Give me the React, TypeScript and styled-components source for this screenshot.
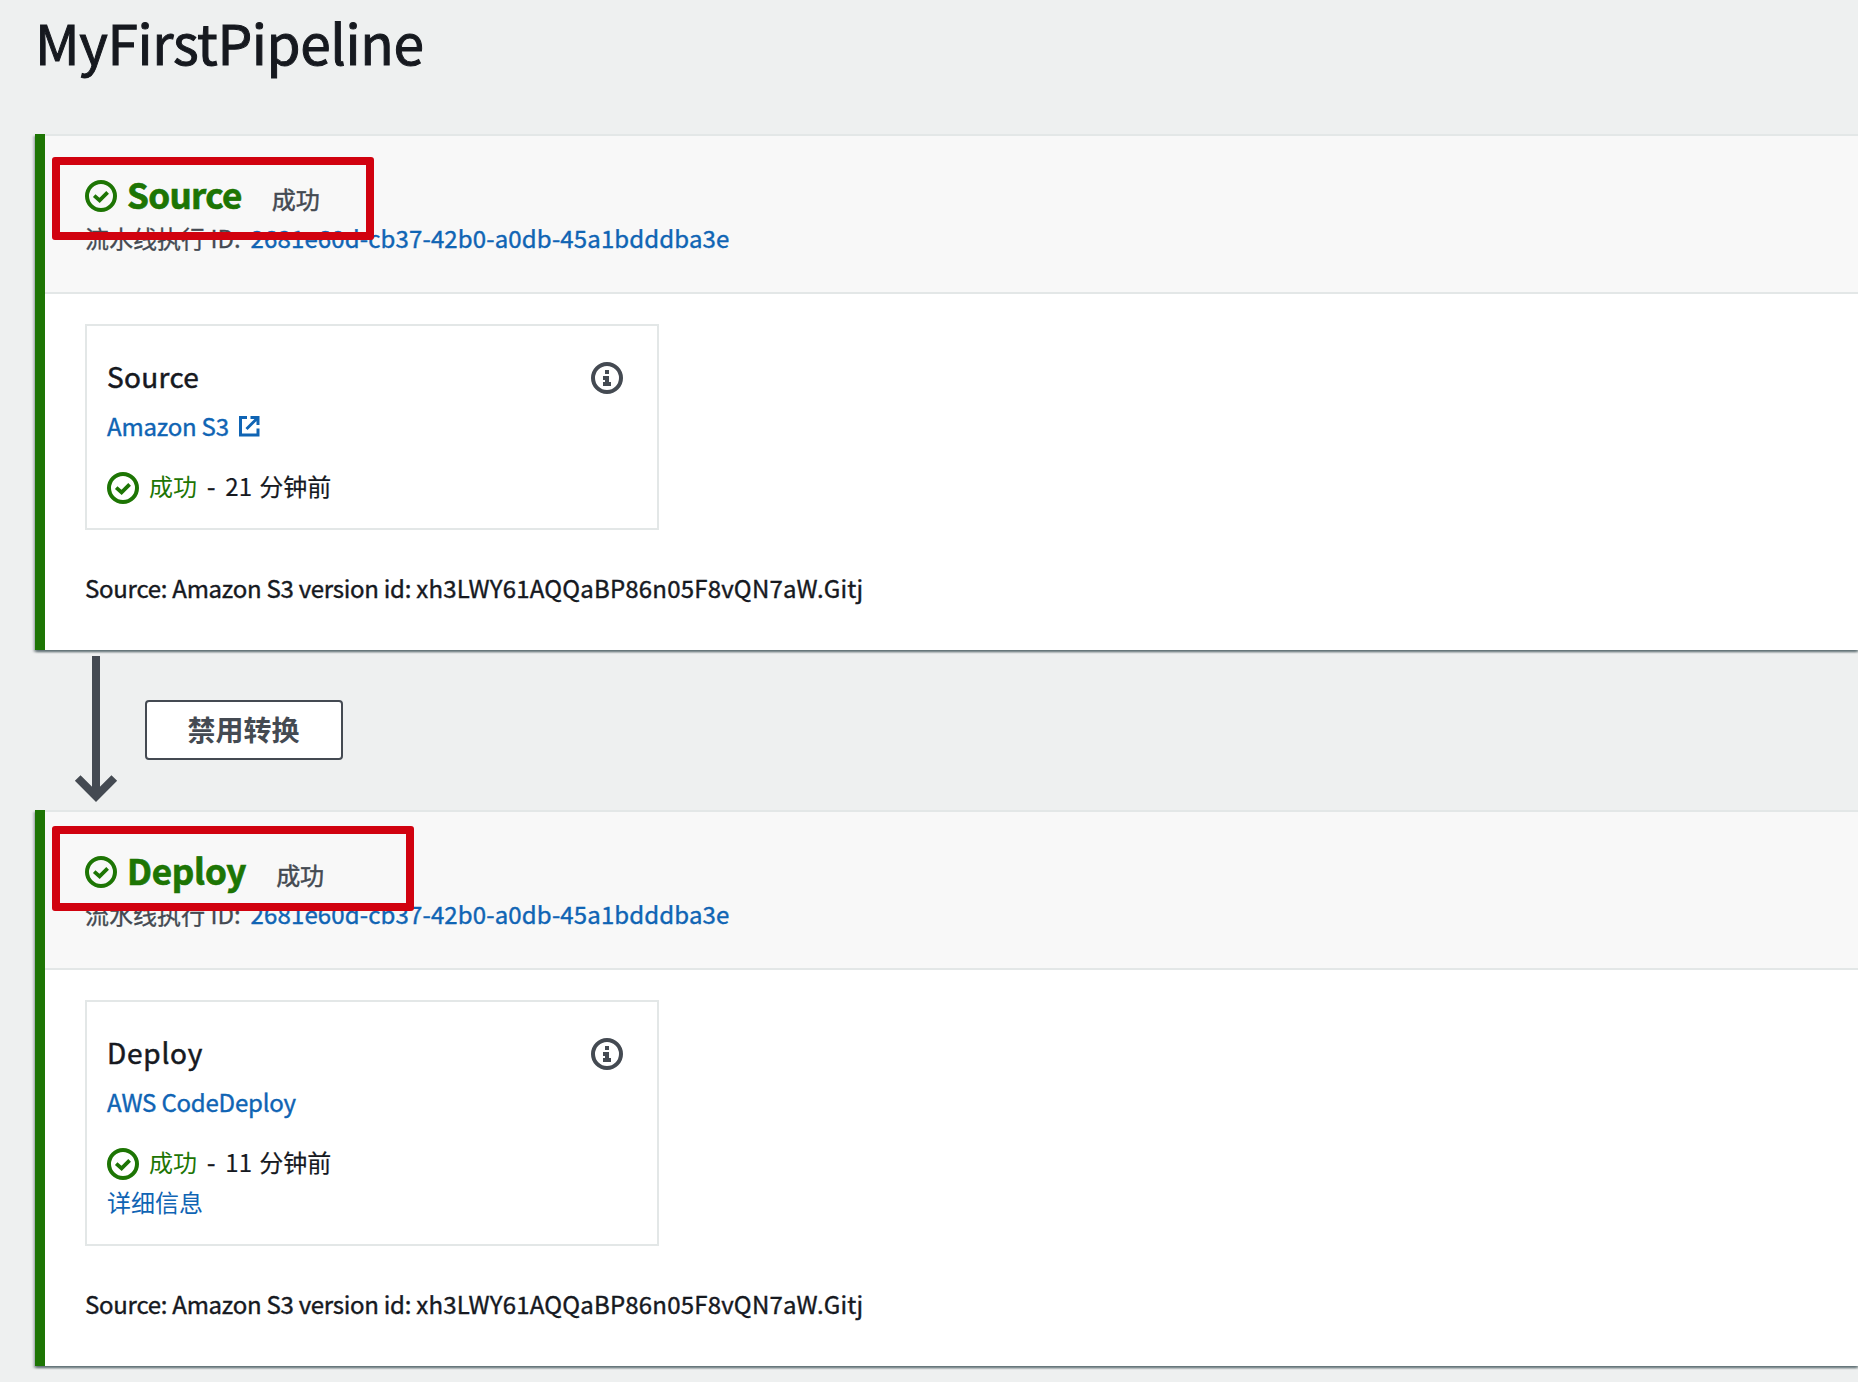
import React from 'react';
import styled, { createGlobalStyle } from 'styled-components';

const color = {
  page: '#eef0f0',
  text: '#16191f',
  muted: '#444a52',
  link: '#0f64b4',
  success: '#1d7504',
  line: '#e3e7e7',
  highlight: '#d1020f',
};

const GlobalStyle = createGlobalStyle`
  *, *::before, *::after { box-sizing: border-box; }
  html, body { margin: 0; padding: 0; background: ${color.page}; }
  body {
    font-family: "Noto Sans CJK SC", "Noto Sans", sans-serif;
    font-size: 24px;
    line-height: 40px;
    color: ${color.text};
    overflow: hidden;
  }
`;

const Page = styled.main`
  height: 1382px;
  padding: 8px 0 0 35px;
  overflow: hidden;
`;

const Title = styled.h1`
  margin: 0 0 60px;
  font-size: 55px;
  font-weight: 400;
  line-height: 66px;
  letter-spacing: -0.4px;
  -webkit-text-stroke: 1px ${color.text};
`;

const Panel = styled.section`
  border-left: 10px solid ${color.success};
  background: #fff;
  box-shadow:
    0 2px 2px 0 rgba(0, 28, 36, 0.4),
    2px 2px 2px 0 rgba(0, 28, 36, 0.18),
    -2px 2px 2px 0 rgba(0, 28, 36, 0.18);
`;

const PanelHeader = styled.header`
  position: relative;
  height: 160px;
  padding: 33px 40px 0;
  border-top: 2px solid ${color.line};
  border-bottom: 2px solid ${color.line};
  background: #f8f8f8;
`;

const Highlight = styled.div<{ $top: number; $width: number; $height: number }>`
  position: absolute;
  left: 7px;
  top: ${(p) => p.$top}px;
  width: ${(p) => p.$width}px;
  height: ${(p) => p.$height}px;
  border: 8px solid ${color.highlight};
  border-radius: 3px;
`;

const StageRow = styled.div`
  display: flex;
  align-items: baseline;
  height: 49px;
`;

const StageName = styled.h2<{ $spacing: number }>`
  margin: 0 0 0 10px;
  font-size: 35px;
  font-weight: 700;
  line-height: 49px;
  letter-spacing: ${(p) => p.$spacing}px;
  color: ${color.success};
  -webkit-text-stroke: 0.7px ${color.success};
`;

const StageState = styled.span`
  margin-left: 30px;
  color: ${color.muted};
  -webkit-text-stroke: 0.5px ${color.muted};
`;

const ExecutionRow = styled.div`
  display: flex;
  gap: 10px;
  color: ${color.muted};
  -webkit-text-stroke: 0.3px ${color.muted};
`;

const Link = styled.a<{ $spacing?: number; $stroke?: number }>`
  display: inline-flex;
  color: ${color.link};
  text-decoration: none;
  letter-spacing: ${(p) => p.$spacing ?? 0}px;
  -webkit-text-stroke: ${(p) => p.$stroke ?? 0.4}px ${color.link};
`;

const PanelBody = styled.div`
  padding: 30px 40px 42px;
`;

const ActionCard = styled.article`
  width: 574px;
  padding: 30px 34px 22px 20px;
  border: 2px solid ${color.line};
`;

const CardHead = styled.div`
  display: flex;
  justify-content: space-between;
  align-items: flex-start;
  height: 40px;
  margin-bottom: 10px;
`;

const CardTitle = styled.h3<{ $spacing: number }>`
  margin: 0;
  font-size: 28px;
  font-weight: 400;
  letter-spacing: ${(p) => p.$spacing}px;
  -webkit-text-stroke: 0.5px ${color.text};
`;

const ProviderRow = styled.div`
  display: flex;
  align-items: flex-start;
  gap: 10px;
  margin-bottom: 20px;
`;

const StatusRow = styled.div`
  display: flex;
`;

const StatusText = styled.span`
  margin-left: 10px;
  color: ${color.success};
`;

const Dash = styled.span`
  margin: 0 10px;
  -webkit-text-stroke: 0.5px ${color.text};
`;

const Ago = styled.span`
  word-spacing: 2px;
  -webkit-text-stroke: 0.2px ${color.text};
`;

const Revision = styled.p`
  margin: 38px 0 0;
  white-space: pre;
  letter-spacing: -0.27px;
  -webkit-text-stroke: 0.4px ${color.text};
`;

const RevisionId = styled.span`
  letter-spacing: 0.2px;
`;

const Transition = styled.div`
  display: flex;
  align-items: flex-start;
  height: 160px;
  padding: 6px 0 0 39px;
`;

const TransitionButton = styled.button`
  width: 198px;
  height: 60px;
  margin: 44px 0 0 27px;
  padding: 0 1px 2px 0;
  border: 2px solid ${color.muted};
  border-radius: 4px;
  background: #fff;
  color: ${color.muted};
  font: 700 28px/54px "Noto Sans CJK SC", sans-serif;
`;

const Icon = styled.svg<{ $top: number }>`
  display: block;
  flex: none;
  align-self: flex-start;
  margin-top: ${(p) => p.$top}px;
  fill: none;
`;

const CheckIcon = ({ top }: { top: number }) => (
  <Icon $top={top} width="32" height="32" viewBox="0 0 16 16" stroke={color.success} strokeWidth="2">
    <circle cx="8" cy="8" r="7" />
    <path d="M4.6 7.8 7.3 10.2 11.3 6.2" strokeWidth="1.9" />
  </Icon>
);

const InfoIcon = () => (
  <Icon $top={6} width="32" height="32" viewBox="0 0 32 32">
    <circle cx="16" cy="16" r="14" stroke={color.muted} strokeWidth="4" />
    <path d="M14 8h4v4h-4zM12 14h6v6h2v4h-8v-4h2v-2h-2z" fill={color.muted} />
  </Icon>
);

const ExternalIcon = () => (
  <Icon $top={10} width="21" height="21" viewBox="0 0 21 21" stroke={color.link} strokeWidth="3">
    <path d="M8 1.5H1.5v17.5H19v-6.5M11.5 1.5H19v7.5M18.5 2 7.5 13" />
  </Icon>
);

const DownArrow = () => (
  <Icon $top={0} width="44" height="147" viewBox="0 0 44 147" stroke={color.muted} strokeWidth="8">
    <path d="M22 0v140M3.7 122 22 140.3 40.3 122" />
  </Icon>
);

const EXECUTION_ID = '2681e60d-cb37-42b0-a0db-45a1bdddba3e';
const REVISION_ID = 'xh3LWY61AQQaBP86n05F8vQN7aW.Gitj';

type StageProps = {
  name: string;
  spacing: number;
  cardSpacing: number;
  provider: string;
  external?: boolean;
  ago: string;
  details?: boolean;
  highlight: { top: number; width: number; height: number };
};

const Stage = ({ name, spacing, cardSpacing, provider, external, ago, details, highlight }: StageProps) => (
  <Panel>
    <PanelHeader>
      <StageRow>
        <CheckIcon top={11} />
        <StageName $spacing={spacing}>{name}</StageName>
        <StageState>成功</StageState>
      </StageRow>
      <ExecutionRow>
        <span>流水线执行 ID:</span>
        <Link $spacing={0.13}>{EXECUTION_ID}</Link>
      </ExecutionRow>
      <Highlight $top={highlight.top} $width={highlight.width} $height={highlight.height} />
    </PanelHeader>
    <PanelBody>
      <ActionCard>
        <CardHead>
          <CardTitle $spacing={cardSpacing}>{name}</CardTitle>
          <InfoIcon />
        </CardHead>
        <ProviderRow>
          <Link $spacing={-0.2}>{provider}</Link>
          {external && <ExternalIcon />}
        </ProviderRow>
        <StatusRow>
          <CheckIcon top={6} />
          <StatusText>成功</StatusText>
          <Dash>-</Dash>
          <Ago>{ago}</Ago>
        </StatusRow>
        {details && <Link $stroke={0}>详细信息</Link>}
      </ActionCard>
      <Revision>
        {'Source: Amazon S3 version id: '}
        <RevisionId>{REVISION_ID}</RevisionId>
      </Revision>
    </PanelBody>
  </Panel>
);

export default function App() {
  return (
    <>
      <GlobalStyle />
      <Page>
        <Title>MyFirstPipeline</Title>
        <Stage
          name="Source"
          spacing={-0.65}
          cardSpacing={0.3}
          provider="Amazon S3"
          external
          ago="21 分钟前"
          highlight={{ top: 21, width: 322, height: 83 }}
        />
        <Transition>
          <DownArrow />
          <TransitionButton>禁用转换</TransitionButton>
        </Transition>
        <Stage
          name="Deploy"
          spacing={-0.25}
          cardSpacing={0.75}
          provider="AWS CodeDeploy"
          ago="11 分钟前"
          details
          highlight={{ top: 14, width: 362, height: 85 }}
        />
      </Page>
    </>
  );
}
